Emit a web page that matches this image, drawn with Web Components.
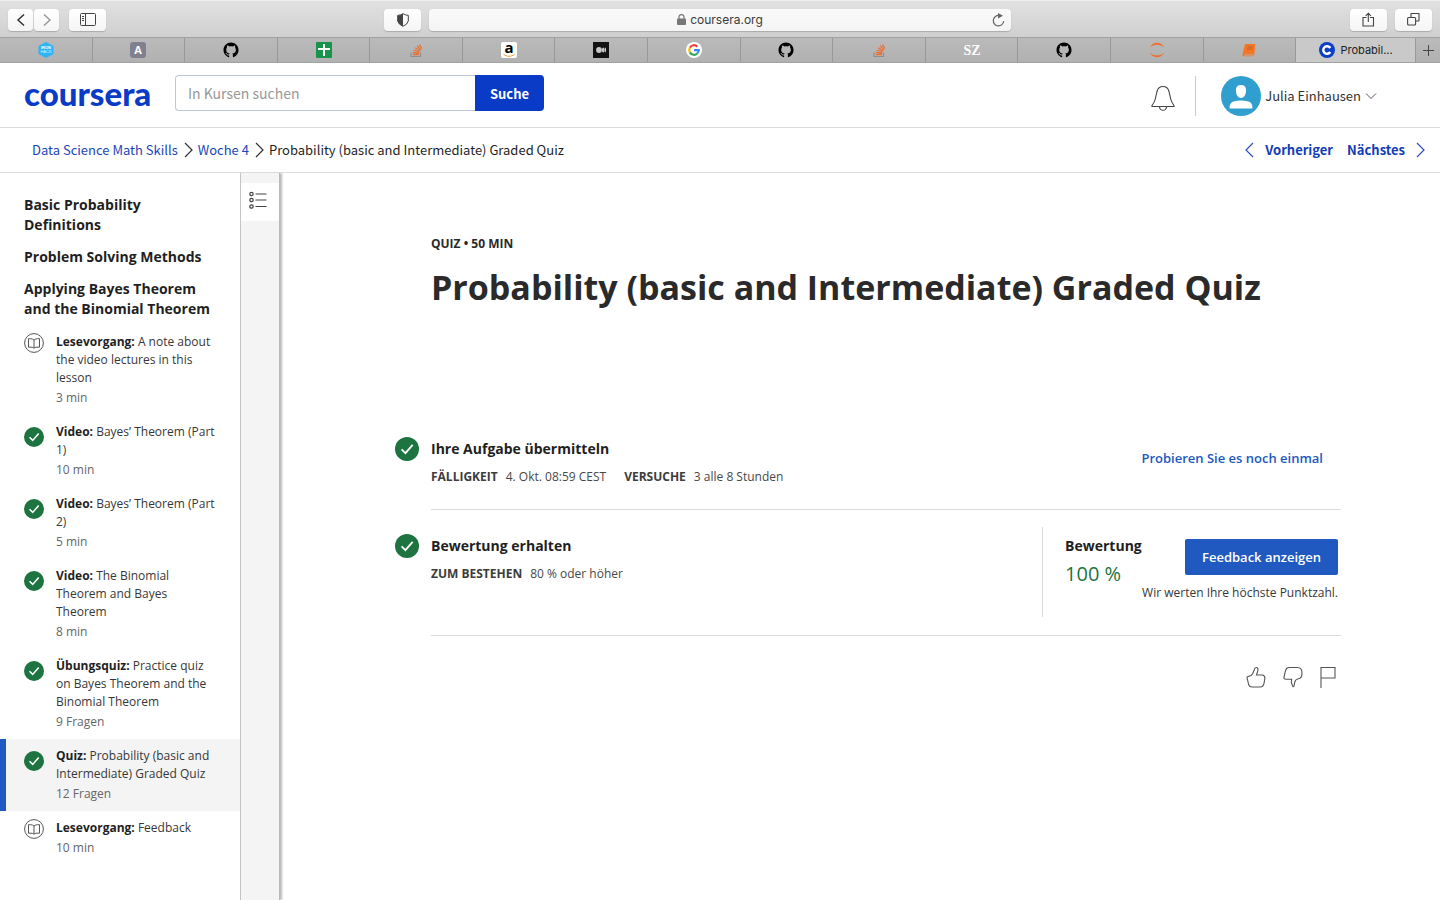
<!DOCTYPE html>
<html lang="de">
<head>
<meta charset="utf-8">
<title>Probability (basic and Intermediate) Graded Quiz | Coursera</title>
<style>
html, body { margin: 0; height: 100%; background: #fff; }
body { font-family: "Open Sans", sans-serif; color: #1f1f1f; --source: "Noto Sans CJK SC", sans-serif; --blue: #2059c0; --royal: #0a3bc7; --link: #1a46b8; --green: #1d7440; }
</style>
</head>
<body>
<course-page></course-page>
<script>
const define = (name, html) => {
  const t = document.createElement('template');
  t.innerHTML = html;
  customElements.define(name, class extends HTMLElement {
    constructor() {
      super();
      this.attachShadow({ mode: 'open' }).append(t.content.cloneNode(true));
    }
  });
};

const svg = (w, h, body, extra = '') => `<svg width="${w}" height="${h}" viewBox="0 0 ${w} ${h}" fill="none" aria-hidden="true" ${extra}>${body}</svg>`;
const line = (c, w = 1) => `stroke="${c}" stroke-width="${w}"`;
const github = '<path fill="#000" transform="translate(.5 .5) scale(.94)" d="M8 0C3.58 0 0 3.58 0 8c0 3.54 2.29 6.53 5.47 7.59.4.07.55-.17.55-.38 0-.19-.01-.82-.01-1.49-2.01.37-2.53-.49-2.69-.94-.09-.23-.48-.94-.82-1.13-.28-.15-.68-.52-.01-.53.63-.01 1.08.58 1.23.82.72 1.21 1.87.87 2.33.66.07-.52.28-.87.51-1.07-1.78-.2-3.64-.89-3.64-3.95 0-.87.31-1.59.82-2.15-.08-.2-.36-1.02.08-2.12 0 0 .67-.21 2.2.82.64-.18 1.32-.27 2-.27s1.36.09 2 .27c1.53-1.04 2.2-.82 2.2-.82.44 1.1.16 1.92.08 2.12.51.56.82 1.27.82 2.15 0 3.07-1.87 3.75-3.65 3.95.29.25.54.73.54 1.48 0 1.07-.01 1.93-.01 2.2 0 .21.15.46.55.38A8.01 8.01 0 0016 8c0-4.42-3.58-8-8-8z"/>';
const stack = `<path d="M3 10.500v4h9.500v-4" ${line('#909090', 1.2)}/><path d="M4.700 12.500h6.200M4.900 10.300l6.200 1M5.700 8l5.700 2.100M7.200 5.700l4.900 3.200M9.200 3.800l3.900 4.100M11.400 2.500l2.400 4" ${line('#ea7034', 1.3)}/>`;
const icons = {
  iron: '<path d="M8 0l7.500 4v8L8 16 .5 12V4z" fill="#2fb5f5"/><text x="8" y="7" font-family="Liberation Sans, sans-serif" font-size="4" font-weight="700" text-anchor="middle" fill="#fff">IRON</text><text x="8" y="11" font-family="Liberation Sans, sans-serif" font-size="4" text-anchor="middle" fill="#d5f0ff">HACK</text>',
  a: '<rect width="16" height="16" rx="3" fill="#81808f"/><text x="8" y="12" font-family="Open Sans, sans-serif" font-size="11" font-weight="700" text-anchor="middle" fill="#fff">A</text>',
  github,
  sheet: '<rect width="16" height="16" rx="1" fill="#17934b"/><path d="M2 7h12M8 2v12" stroke="#fff" stroke-width="2"/>',
  stack,
  amazon: '<rect width="16" height="16" rx="2" fill="#fff"/><text x="8" y="11" font-family="Open Sans, sans-serif" font-size="15" font-weight="700" text-anchor="middle" fill="#000">a</text><path d="M2.500 12.300c3.500 2.600 7.500 2.600 11 .1" stroke="#f19b35"/>',
  medium: '<rect width="16" height="16" fill="#121212"/><circle cx="6" cy="8" r="2.900" fill="#c8c8c8"/><ellipse cx="10.300" cy="8" rx="1.400" ry="2.600" fill="#c8c8c8"/><ellipse cx="12.500" cy="8" rx=".6" ry="2.400" fill="#c8c8c8"/>',
  google: '<circle cx="8" cy="8" r="8" fill="#fff"/><g stroke-width="2.200"><path d="M3.900 5.600A4.700 4.700 0 0 1 11.400 4.700" stroke="#ea4335"/><path d="M3.900 10.400a4.700 4.700 0 0 1 0-4.800" stroke="#fbbc05"/><path d="M11.200 11.500a4.700 4.700 0 0 1-7.300-1.100" stroke="#34a853"/><path d="M8 8.200h4.700a4.700 4.700 0 0 1-1.500 3.300" stroke="#4285f4"/></g>',
  sz: '<text x="8" y="13" font-family="Liberation Serif, serif" font-size="14" font-weight="700" text-anchor="middle" fill="#fff">SZ</text>',
  jupyter: '<path d="M.8 5.500C3.500-.9 12.500-.9 15.200 5.500 11.500 1.700 4.500 1.700 .8 5.500zM.8 10.500c2.700 6.400 11.700 6.400 14.400 0-3.700 3.800-10.700 3.800-14.400 0z" fill="#ee6f2d"/>',
  book: '<path d="M5 2h8.500q1 0 .8 1l-1.800 9q-.2.500-.7.500H3.500v1h8.800l1.700-8 .5.500-1.600 7.500q-.2.700-1 .7H2.500q-1.300-.2-1-1.600l2.200-9.600Q4 2 5 2z" fill="#f37726"/><path d="M6.500 5h5.500M6 7h5.500" stroke="#c0602a"/>',
  coursera: '<circle cx="8" cy="8" r="8" fill="#0c3fc4"/><path d="M11.300 10A3.800 3.800 0 1 1 11.300 6" stroke="#fff" stroke-width="2.400"/>',
};

for (const [n, body] of Object.entries(icons))
  define('fav-' + n, `<style>:host{display:inline-flex}svg{overflow:visible}</style>${svg(16, 16, body)}`);

/* Safari tab: favicon and optional title */
define('browser-tab', `<style>
:host{display:flex;flex:1 1 0;min-width:0;align-items:center;justify-content:center;border-right:1px solid #999;box-sizing:border-box;gap:6px;font:11px Inter,sans-serif;color:#222}
:host([active]){flex:0 0 120px;background:#c9c9c9}
</style><slot></slot>`);

define('browser-chrome', `<style>
:host{display:block}
.bar{height:37px;box-sizing:border-box;padding:1px 8px 0;display:grid;grid-template-columns:376px 1fr 421px;align-items:center;background:linear-gradient(#e1e1e1,#cfcfcf);border-top:1px solid #eee}
.group{display:flex;gap:1px;align-items:center}
.mid{gap:8px}.end{justify-content:flex-end;gap:8px}
button{display:grid;place-items:center;width:37px;height:22px;padding:0;border:0;border-radius:4px;background:linear-gradient(#fff,#f4f4f4);box-shadow:0 1px 1px #aaa}
.nav{width:25px}.side{margin-left:9px}
.address{display:grid;grid-template-columns:1fr auto 1fr;align-items:center;flex:1;height:22px;box-sizing:border-box;padding:0 6px;border-radius:4px;background:linear-gradient(#fafafa,#f4f4f4);box-shadow:0 1px 1px #aaa;font:12px Inter,sans-serif;color:#3a3a3a}
.host{grid-column:2;display:flex;gap:4px;align-items:center}
.address > svg{justify-self:end}
.tabs{display:flex;height:26px;box-sizing:border-box;border-top:1px solid #a2a2a2;border-bottom:1px solid #a2a2a2;background:linear-gradient(#bababa,#b1b1b1)}
.new{width:24px;height:24px;border-radius:0;background:none;box-shadow:none}
</style>
<div class="bar">
 <div class="group">
  <button class="nav" aria-label="Zurück">${svg(10, 14, `<path d="M8 1.500L2 7l6 5.500" ${line('#333', 1.5)}/>`)}</button>
  <button class="nav" aria-label="Vorwärts">${svg(10, 14, `<path d="M2 1.500L8 7l-6 5.500" ${line('#999', 1.5)}/>`)}</button>
  <button class="side" aria-label="Seitenleiste">${svg(16, 13, `<rect x=".5" y=".5" width="15" height="12" rx="1" ${line('#444')}/><path d="M5.500 1v11M2 3.500h2M2 5.500h2M2 7.500h2" ${line('#444')}/>`)}</button>
 </div>
 <div class="group mid">
  <button aria-label="Datenschutzbericht">${svg(12, 14, `<path d="M6 .7Q8.500 2.200 11.300 2.400V8Q10.500 11.500 6 13.300 1.500 11.500.7 8V2.400Q3.500 2.200 6 .7z" ${line('#444')}/><path d="M6 .7v12.600Q1.500 11.500.7 8V2.400Q3.500 2.200 6 .7z" fill="#444"/>`)}</button>
  <div class="address"><span class="host">${svg(9, 11, `<rect y="4.500" width="9" height="6.500" rx="1" fill="#777"/><path d="M2 5V3q0-2.300 2.500-2.300T7 3v2" ${line('#777', 1.2)}/>`)}coursera.org</span>${svg(13, 14, `<path d="M7 2.500A5.200 5.200 0 1 0 11.700 8" ${line('#666', 1.2)}/><path d="M6 0l5 2.700L6 5.400z" fill="#666"/>`)}</div>
 </div>
 <div class="group end">
  <button aria-label="Teilen">${svg(13, 15, `<path d="M4.500 5.500h-3.500v8.500h10.500V5.500H8M6.300 10V1.200M3.700 3.800l2.600-2.600 2.600 2.600" ${line('#444', 1.1)}/>`)}</button>
  <button aria-label="Tabübersicht">${svg(13, 13, `<rect x=".6" y="4.500" width="8" height="7.500" rx="1" ${line('#444', 1.1)}/><path d="M4 4V1q0-.5.500-.5h7q.500 0 .5.500v6.500q0 .5-.5.500H9" ${line('#444', 1.1)}/>`)}</button>
 </div>
</div>
<div class="tabs">
${['iron', 'a', 'github', 'sheet', 'stack', 'amazon', 'medium', 'google', 'github', 'stack', 'sz', 'github', 'jupyter', 'book'].map(n => `<browser-tab><fav-${n}></fav-${n}></browser-tab>`).join('')}
<browser-tab active><fav-coursera></fav-coursera>Probabil...</browser-tab>
<button class="new" aria-label="Neuer Tab">${svg(11, 11, `<path d="M5.500 0v11M0 5.500h11" ${line('#444')}/>`)}</button>
</div>`);

define('site-header', `<style>
:host{display:flex;align-items:center;height:62px;padding:2px 63px 0 24px;border-bottom:1px solid #dcdcdc;font:14px/20px var(--source)}
.logo{width:128px;margin-bottom:6px;font:900 33px/40px Lato,sans-serif;color:var(--royal);text-decoration:none}
form{display:flex;height:36px;margin:0 auto 6px 23px}
input{width:300px;box-sizing:border-box;padding:0 12px;border:1px solid #c0c6d4;border-right:0;border-radius:4px 0 0 4px;font:14px var(--source);color:#222;outline:0}
input::placeholder{color:#999;opacity:1}
form button{width:69px;padding:0;border:0;border-radius:0 4px 4px 0;background:var(--royal);color:#fff;font:700 13px var(--source)}
.plain{display:flex;align-items:center;padding:0;border:0;background:none;font:13px/20px var(--source);color:#333}
.bell{padding-top:4px}
.rule{width:1px;height:40px;margin:0 25px 0 20px;background:#ccc}
.user{gap:4px}
</style>
<a class="logo" href="#">coursera</a>
<form role="search"><input type="search" aria-label="In Kursen suchen" placeholder="In Kursen suchen"><button type="button">Suche</button></form>
<button class="plain bell" aria-label="Benachrichtigungen">${svg(24, 26, `<path d="M1 20.500Q3.500 17.500 4.300 14L6 6.500Q7.300 1.500 12 1.500t6 5L19.700 14q.8 3.500 3.300 6.500v1H1zM8.500 22q.5 3.300 3.500 3.300t3.500-3.300" ${line('#444', 1.1)}/>`)}</button>
<span class="rule"></span>
<button class="plain user">${svg(40, 40, '<circle cx="20" cy="20" r="20" fill="#309fcf"/><path d="M20 9c4.500 0 5.300 3 5 6.500-.3 3.500-2 6.500-5 6.500s-4.700-3-5-6.500C14.700 12 15.500 9 20 9zM8.500 32.500q0-6 4-7 7.500-2 15 0 4 1 4 7z" fill="#fff"/>')}<span>Julia Einhausen</span>${svg(12, 8, `<path d="M1 1.500l5 5 5-5" ${line('#555')}/>`)}</button>`);

define('crumb-bar', `<style>
:host{display:flex;align-items:center;justify-content:space-between;height:44px;padding:0 15px 0 32px;border-bottom:1px solid #dcdcdc;font:13px/20px var(--source)}
ol,nav{display:flex;align-items:center;margin:0;padding:0;list-style:none}
li{display:flex;align-items:center}
li svg{margin:0 5px 0 6px}
a{display:flex;align-items:center;color:var(--link);text-decoration:none}
.steps{gap:14px;font-weight:700}.steps a{gap:11px;color:#123db5}
</style>
<nav aria-label="Brotkrumen"><ol>
<li><a href="#">Data Science Math Skills</a>${svg(9, 16, `<path d="M1 1l7 7-7 7" ${line('#333', 1.2)}/>`)}</li>
<li><a href="#">Woche 4</a>${svg(9, 16, `<path d="M1 1l7 7-7 7" ${line('#333', 1.2)}/>`)}</li>
<li aria-current="page">Probability (basic and Intermediate) Graded Quiz</li></ol></nav>
<nav class="steps" aria-label="Lektionen"><a href="#">${svg(9, 16, `<path d="M8 1L1 8l7 7" ${line('#2a50c0', 1.2)}/>`)}Vorheriger</a><a href="#">Nächstes${svg(9, 16, `<path d="M1 1l7 7-7 7" ${line('#2a50c0', 1.2)}/>`)}</a></nav>`);

define('done-icon', `<style>:host{display:block;width:20px;height:20px}svg{display:block;width:100%;height:100%}</style>
${svg(20, 20, '<circle cx="10" cy="10" r="10" fill="#1d7440"/><path d="M5.500 10.300l3.200 3.100 6-6.900" stroke="#fff" stroke-width="1.500"/>')}`);
define('read-icon', `<style>:host{display:block}svg{display:block}</style>
${svg(20, 20, `<circle cx="10" cy="10" r="9.400" ${line('#555')}/><path d="M10 7Q8.500 5.700 6.500 5.700H4.500v8.500H7q2 0 3 1 1-1 3-1h2.500V5.700h-2Q11.500 5.700 10 7zv8" ${line('#555')}/>`)}`);

/* One lesson entry in the outline */
define('lesson-item', `<style>
:host{display:block;border-left:6px solid transparent;font-size:12px;line-height:18px;color:#373737}
:host([current]){border-color:var(--blue);background:#f4f4f4}
a{display:grid;grid-template-columns:20px 1fr;column-gap:12px;padding:8px 24px 8px 18px;color:inherit;text-decoration:none}
.icon{padding-top:4px}:host([reading]) .icon{padding-top:0}
b{color:#1f1f1f}
.meta{display:block;margin-top:2px;color:#666}
</style><a href="#"><span class="icon"><slot name="icon"></slot></span><span><b><slot name="kind"></slot></b> <slot></slot><span class="meta"><slot name="meta"></slot></span></span></a>`);

const lessons = [
  ['read', 'Lesevorgang:', 'A note about the video lectures in this lesson', '3 min'],
  ['done', 'Video:', 'Bayes’ Theorem (Part 1)', '10 min'],
  ['done', 'Video:', 'Bayes’ Theorem (Part 2)', '5 min'],
  ['done', 'Video:', 'The Binomial Theorem and Bayes Theorem', '8 min'],
  ['done', 'Übungsquiz:', 'Practice quiz on Bayes Theorem and the Binomial Theorem', '9 Fragen'],
  ['done', 'Quiz:', 'Probability (basic and Intermediate) Graded Quiz', '12 Fragen'],
  ['read', 'Lesevorgang:', 'Feedback', '10 min'],
];
define('course-outline', `<style>
:host{display:block;width:240px;padding-top:22px;box-sizing:border-box}
h2{margin:0 24px 12px;font-size:14px;line-height:20px;font-weight:700}
h2:last-of-type{margin-bottom:6px}
</style><h2>Basic Probability Definitions</h2><h2>Problem Solving Methods</h2><h2>Applying Bayes Theorem and the Binomial Theorem</h2>
${lessons.map(([i, k, t, m]) => `<lesson-item ${i === 'read' ? 'reading' : ''} ${k === 'Quiz:' ? 'current' : ''}><${i}-icon slot="icon"></${i}-icon><span slot="kind">${k}</span>${t}<span slot="meta">${m}</span></lesson-item>`).join('')}`);

define('tool-rail', `<style>
:host{display:block;width:40px;box-sizing:border-box;padding-top:10px;border-left:1px solid #c4c4c4;background:#f4f4f4;border-right:1px solid #bbb;box-shadow:2px 0 2px #bbb;clip-path:inset(0 -6px 0 0)}
button{display:grid;place-items:center;width:100%;height:38px;padding:0 4px 4px 0;border:0;background:#fff}
</style><button aria-label="Inhalt">${svg(18, 18, `<g ${line('#444', 1.2)}><circle cx="2.500" cy="3" r="1.700"/><circle cx="2.500" cy="9" r="1.700"/><circle cx="2.500" cy="15.500" r="1.700"/><path d="M6.500 3h11M6.500 9h11M6.500 15.500h11"/></g>`)}</button>`);

/* Status row: done mark, title, details and an action area */
define('status-row', `<style>
:host{display:grid;grid-template-columns:24px 1fr;column-gap:12px}
done-icon{width:24px;height:24px;margin-top:24px}
.body{display:flex;justify-content:space-between;border-bottom:1px solid #dcdcdc}
.text{padding:26px 0 22px}
h2{margin:0 0 8px;font-size:14px;line-height:20px}
.facts{display:flex;gap:18px;font-size:12px;line-height:20px;color:#484848}
</style><done-icon></done-icon><div class="body"><div class="text"><h2><slot name="title"></slot></h2><div class="facts"><slot></slot></div></div><slot name="action"></slot></div>`);
define('fact-pair', `<style>:host{display:flex;gap:8px}b{color:#3c3c3c}</style><b><slot name="label"></slot></b><slot></slot>`);

define('grade-box', `<style>
:host{display:flex;height:90px;margin:17px 3px 18px 0;border-left:1px solid #dcdcdc;padding-left:22px}
.score{padding-top:9px;width:77px;white-space:nowrap}
b{display:block;font-size:14px;line-height:20px}
.num{font-size:20px;line-height:36px;color:var(--green)}
.action{display:flex;flex-direction:column;align-items:flex-end;padding-top:12px}
button{height:36px;padding:0 17px;border:0;border-radius:2px;background:var(--blue);color:#fff;font:600 13px "Open Sans",sans-serif}
small{font-size:12px;line-height:20px;margin-top:8px;color:#373737}
</style><div class="score"><b>Bewertung</b><span class="num">100 %</span></div><div class="action"><button>Feedback anzeigen</button><small>Wir werten Ihre höchste Punktzahl.</small></div>`);

define('quiz-view', `<style>
:host{display:block;padding:61px 99px 40px 115px}
header{padding-left:36px;margin-bottom:102px}
.kicker{margin:0;font-size:12px;line-height:20px;font-weight:700;color:#2a2a2a}
h1{margin:9px 0 0;font-size:34px;line-height:48px;color:#2a2a2a}
.retry{align-self:flex-start;margin:35px 18px 0 0;font-size:13px;line-height:20px;font-weight:600;color:var(--blue);text-decoration:none}
.rate{display:flex;justify-content:flex-end;gap:17px;margin:30px 5px 0 0}
.rate button{display:flex;padding:0;border:0;background:none}
</style>
<header><p class="kicker">QUIZ • 50 MIN</p><h1>Probability (basic and Intermediate) Graded Quiz</h1></header>
<status-row><span slot="title">Ihre Aufgabe übermitteln</span>
<fact-pair><span slot="label">FÄLLIGKEIT</span>4. Okt. 08:59 CEST</fact-pair><fact-pair><span slot="label">VERSUCHE</span>3 alle 8 Stunden</fact-pair>
<a class="retry" slot="action" href="#">Probieren Sie es noch einmal</a></status-row>
<status-row><span slot="title">Bewertung erhalten</span><fact-pair><span slot="label">ZUM BESTEHEN</span>80 % oder höher</fact-pair><grade-box slot="action"></grade-box></status-row>
<div class="rate">
<button aria-label="Gefällt mir">${svg(20, 22, `<path d="M1 11.500q0-.8.900-.9 3.500-.3 4.600-2.600L8.200 4Q8.700 1.500 10.400 1.500t1.600 2.700L10.500 9h5.500q3 .3 2.900 3.300l-.8 4.500q-.7 4.200-4 4.200H6Q3.500 21 2.700 18.800z" ${line('#555', 1.1)}/>`)}</button>
<button aria-label="Gefällt mir nicht">${svg(20, 22, `<path d="M1 11l1.600-6.600Q3.500 1.500 6 1.500h8.500q4.500 0 4.500 5.500t-3.500 5.800q-3 .4-3.700 3.200l-.8 3.800Q10.600 21 9.800 20.500l-1.500-4L8.700 13.300 3 13.200Q.600 13 1 11z" ${line('#555', 1.1)}/>`)}</button>
<button aria-label="Melden">${svg(16, 22, `<path d="M1 22V1.500h14v10.500H1" ${line('#555', 1.1)}/>`)}</button>
</div>`);

define('course-page', `<style>
:host{display:flex;flex-direction:column;min-height:100vh}
main{flex:1;display:grid;grid-template-columns:auto auto 1fr}
</style><browser-chrome></browser-chrome><site-header></site-header><crumb-bar></crumb-bar>
<main><course-outline></course-outline><tool-rail></tool-rail><quiz-view></quiz-view></main>`);
</script>
</body>
</html>
